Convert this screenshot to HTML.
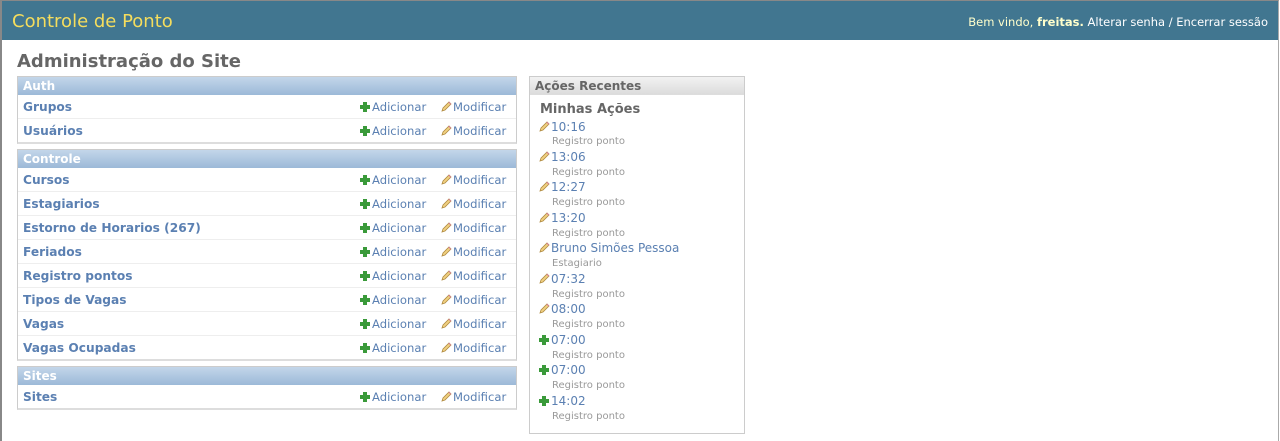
<!DOCTYPE html>
<html><head><meta charset="utf-8"><style>
*{margin:0;padding:0;box-sizing:border-box}
body{width:1280px;height:441px;background:#fff;font-family:"DejaVu Sans","Liberation Sans",sans-serif;position:relative;overflow:hidden}
#frame{position:absolute;left:0;top:0;width:1279px;height:441px;border-left:2px solid #888;border-right:1px solid #aaa;border-top:1px solid #888}
#hdr{position:absolute;left:2px;top:1px;width:1276px;height:39px;background:#417690}
#hdr .t{position:absolute;left:10px;top:10px;font-size:18px;color:#f5dd5d}
#hdr .u{position:absolute;right:10px;top:14px;font-size:11.5px;color:#ffc}
#hdr .u b{color:#ffc}#hdr .u span{color:#fff}
h1{position:absolute;left:17px;top:51px;font-size:18px;color:#666;font-weight:bold}
.mod{position:absolute;left:17px;width:500px;border:1px solid #ccc;border-bottom:2px solid #ddd}
.cap{height:18px;background:linear-gradient(#c3d6ea,#9cb9d8);color:#fff;font-weight:bold;font-size:12px;padding:2px 0 0 5px}
.row{height:24px;border-bottom:1px solid #eee;position:relative}
.row:last-child{border-bottom:none;height:23px}
.row .n{position:absolute;left:5px;top:5px;font-size:12.2px;font-weight:bold;color:#5b80b2}
.row .a{position:absolute;left:342px;top:5px;font-size:11.6px;color:#5b80b2}
.row .m{position:absolute;left:423px;top:5px;font-size:11.6px;color:#5b80b2}
.plus{display:inline-block;width:10px;height:10px;position:relative;vertical-align:-1px;margin-right:2px}
.plus:before{content:"";position:absolute;left:3px;top:0;width:4px;height:10px;background:#3a9a3a}
.plus:after{content:"";position:absolute;left:0;top:3px;width:10px;height:4px;background:#3a9a3a}
.pen{display:inline-block;width:11px;height:11px;vertical-align:-1px;margin-right:1px}
#rec{position:absolute;left:529px;top:76px;width:216px;height:358px;border:1px solid #ccc}
#rec .cap2{height:18px;background:linear-gradient(#f2f2f2,#dcdcdc);color:#666;font-weight:bold;font-size:12px;padding:2px 0 0 5px;border-bottom:1px solid #ddd}
#rec h2{position:absolute;left:10px;top:25px;font-size:13px;color:#666;font-weight:bold}
.it{position:absolute;left:9px;font-size:12px;color:#5b80b2}
.ds{position:absolute;left:22px;font-size:10px;color:#999}
</style></head><body>
<div id="frame"></div>
<div id="hdr"><div class="t">Controle de Ponto</div><div class="u">Bem vindo, <b>freitas.</b> <span>Alterar senha / Encerrar sessão</span></div></div>
<h1>Administração do Site</h1>
<svg width="0" height="0" style="position:absolute"><defs><symbol id="p" viewBox="0 0 11 11"><path d="M1 10 L2 7 L8 1 L10 3 L4 9 Z" fill="#f0d080" stroke="#b08a40" stroke-width="0.8"/><path d="M8 1 L10 3 L9.5 3.5 L7.5 1.5 Z" fill="#e070c0"/></symbol></defs></svg>
<div class="mod" style="top:76px"><div class="cap">Auth</div>
<div class="row"><span class="n">Grupos</span><span class="a"><i class="plus"></i>Adicionar</span><span class="m"><svg class="pen"><use href="#p"/></svg>Modificar</span></div>
<div class="row"><span class="n">Usuários</span><span class="a"><i class="plus"></i>Adicionar</span><span class="m"><svg class="pen"><use href="#p"/></svg>Modificar</span></div>
</div>
<div class="mod" style="top:149px"><div class="cap">Controle</div>
<div class="row"><span class="n">Cursos</span><span class="a"><i class="plus"></i>Adicionar</span><span class="m"><svg class="pen"><use href="#p"/></svg>Modificar</span></div>
<div class="row"><span class="n">Estagiarios</span><span class="a"><i class="plus"></i>Adicionar</span><span class="m"><svg class="pen"><use href="#p"/></svg>Modificar</span></div>
<div class="row"><span class="n">Estorno de Horarios (267)</span><span class="a"><i class="plus"></i>Adicionar</span><span class="m"><svg class="pen"><use href="#p"/></svg>Modificar</span></div>
<div class="row"><span class="n">Feriados</span><span class="a"><i class="plus"></i>Adicionar</span><span class="m"><svg class="pen"><use href="#p"/></svg>Modificar</span></div>
<div class="row"><span class="n">Registro pontos</span><span class="a"><i class="plus"></i>Adicionar</span><span class="m"><svg class="pen"><use href="#p"/></svg>Modificar</span></div>
<div class="row"><span class="n">Tipos de Vagas</span><span class="a"><i class="plus"></i>Adicionar</span><span class="m"><svg class="pen"><use href="#p"/></svg>Modificar</span></div>
<div class="row"><span class="n">Vagas</span><span class="a"><i class="plus"></i>Adicionar</span><span class="m"><svg class="pen"><use href="#p"/></svg>Modificar</span></div>
<div class="row"><span class="n">Vagas Ocupadas</span><span class="a"><i class="plus"></i>Adicionar</span><span class="m"><svg class="pen"><use href="#p"/></svg>Modificar</span></div>
</div>
<div class="mod" style="top:366px"><div class="cap">Sites</div>
<div class="row"><span class="n">Sites</span><span class="a"><i class="plus"></i>Adicionar</span><span class="m"><svg class="pen"><use href="#p"/></svg>Modificar</span></div>
</div>
<div id="rec"><div class="cap2">Ações Recentes</div><h2>Minhas Ações</h2>
<span class="it" style="top:43px"><svg class="pen"><use href="#p"/></svg>10:16</span><span class="ds" style="top:59px">Registro ponto</span>
<span class="it" style="top:73px"><svg class="pen"><use href="#p"/></svg>13:06</span><span class="ds" style="top:90px">Registro ponto</span>
<span class="it" style="top:103px"><svg class="pen"><use href="#p"/></svg>12:27</span><span class="ds" style="top:120px">Registro ponto</span>
<span class="it" style="top:134px"><svg class="pen"><use href="#p"/></svg>13:20</span><span class="ds" style="top:151px">Registro ponto</span>
<span class="it" style="top:164px"><svg class="pen"><use href="#p"/></svg>Bruno Simões Pessoa</span><span class="ds" style="top:181px">Estagiario</span>
<span class="it" style="top:195px"><svg class="pen"><use href="#p"/></svg>07:32</span><span class="ds" style="top:212px">Registro ponto</span>
<span class="it" style="top:225px"><svg class="pen"><use href="#p"/></svg>08:00</span><span class="ds" style="top:242px">Registro ponto</span>
<span class="it" style="top:256px"><i class="plus"></i>07:00</span><span class="ds" style="top:273px">Registro ponto</span>
<span class="it" style="top:286px"><i class="plus"></i>07:00</span><span class="ds" style="top:303px">Registro ponto</span>
<span class="it" style="top:317px"><i class="plus"></i>14:02</span><span class="ds" style="top:334px">Registro ponto</span>
</div>
</body></html>
